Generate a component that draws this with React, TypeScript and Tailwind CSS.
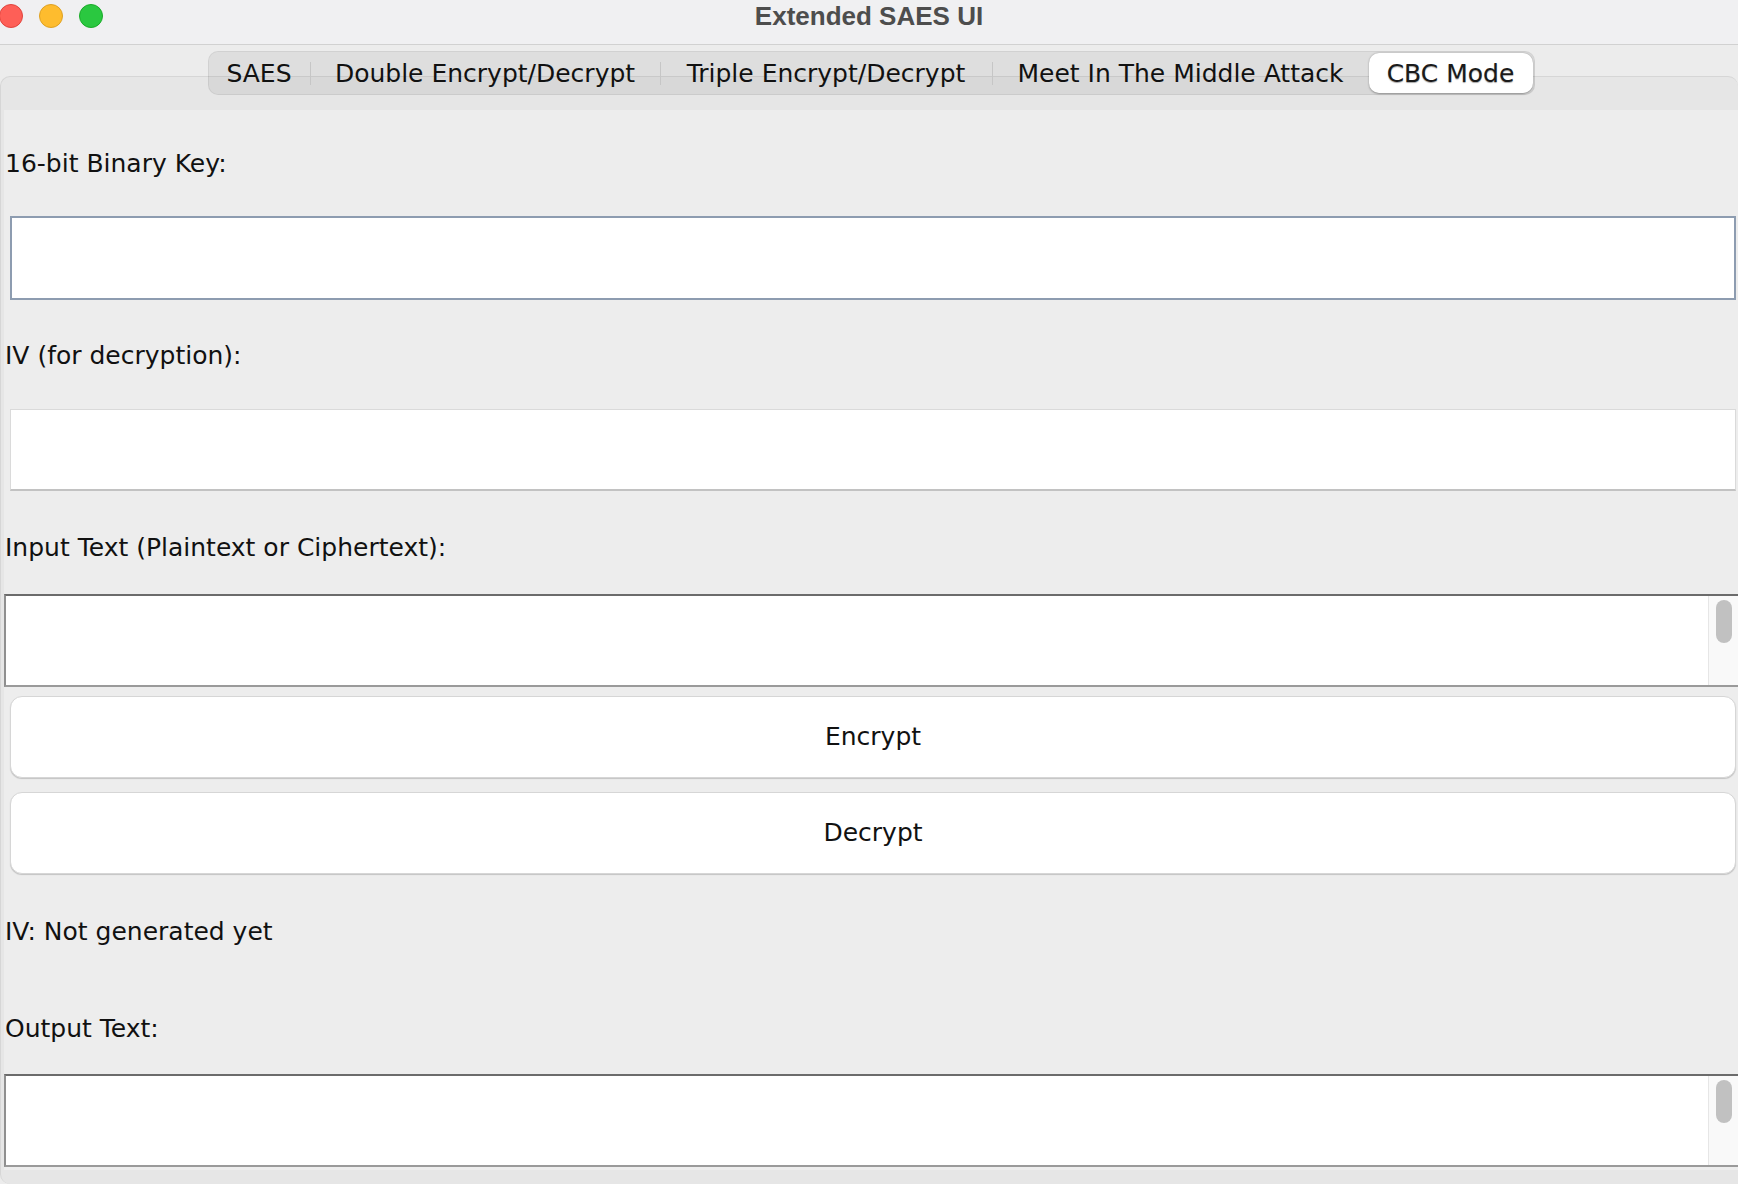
import React from 'react';

const tabs = [
  { label: 'SAES', width: 'w-[101px]' },
  { label: 'Double Encrypt/Decrypt', width: 'w-[349px]' },
  { label: 'Triple Encrypt/Decrypt', width: 'w-[331px]' },
  { label: 'Meet In The Middle Attack', width: 'w-[376px]' },
];

const Label = ({ children, className = '' }: { children: React.ReactNode; className?: string }) => (
  <div className={`pl-[1px] text-[25px] leading-[30px] text-[#111] ${className}`}>{children}</div>
);

const ScrollArea = ({ className = '' }: { className?: string }) => (
  <div
    className={`flex h-[93px] border-t-2 border-b-2 border-l-2 border-t-[#6b6b6b] border-b-[#9a9a9a] border-l-[#8f8f8f] bg-white ${className}`}
  >
    <div className="flex-1" />
    <div className="w-[30px] border-l border-[#e6e6e6] bg-[#f9f9f9] pt-[4px] pl-[7px]">
      <div className="h-[43px] w-[16px] rounded-full bg-[#c1c1c1]" />
    </div>
  </div>
);

const MacButton = ({ children, className = '' }: { children: React.ReactNode; className?: string }) => (
  <button
    className={`ml-[6px] mr-[2px] flex h-[82px] items-center justify-center rounded-[12px] border border-[#d6d6d6] bg-white text-[25px] text-[#111] shadow-[0_1px_1px_rgba(0,0,0,0.18)] ${className}`}
  >
    {children}
  </button>
);

export default function App() {
  return (
    <div className="flex h-[1184px] w-[1738px] flex-col overflow-hidden bg-[#ececec] font-['DejaVu_Sans',sans-serif]">
      {/* title bar */}
      <div className="grid h-[45px] grid-cols-[1fr_auto_1fr] border-b border-[#d1d1d1] bg-[#f0f0f2]">
        <div className="-ml-[1px] flex items-start gap-[16px] pt-[4px]">
          <span className="h-[24px] w-[24px] rounded-full border border-[#e0443e] bg-[#fe5f57]" />
          <span className="h-[24px] w-[24px] rounded-full border border-[#dea123] bg-[#febc2e]" />
          <span className="h-[24px] w-[24px] rounded-full border border-[#1aab29] bg-[#2ac840]" />
        </div>
        <div className="pt-[2px] font-['Liberation_Sans',sans-serif] text-[26px] leading-[29px] font-bold text-[#4d4d4d]">
          Extended SAES UI
        </div>
        <div />
      </div>

      {/* tab strip */}
      <div className="relative z-10 flex h-[31px] justify-center pt-[6px] pl-[4px]">
        <div className="flex h-[44px] items-center rounded-[10px] border border-[rgba(0,0,0,0.06)] bg-[rgba(0,0,0,0.06)] pr-[1px]">
          {tabs.map((t, i) => (
            <React.Fragment key={t.label}>
              {i > 0 && <span className="h-[23px] w-px bg-[#c6c6c6]" />}
              <div className={`${t.width} pt-[2px] text-center text-[25px] leading-[30px] text-[#111]`}>{t.label}</div>
            </React.Fragment>
          ))}
          <div className="flex h-[40px] w-[164px] items-center justify-center rounded-[10px] bg-white pt-[2px] text-[25px] text-[#1a1a1a] shadow-[0_0.5px_2px_rgba(0,0,0,0.35)] [text-shadow:0_1px_1px_rgba(0,0,0,0.35)]">
            CBC Mode
          </div>
        </div>
      </div>

      {/* tabbed pane */}
      <div className="flex flex-1 flex-col rounded-t-[10px] rounded-bl-[10px] border-t border-l border-[#d6d6d6] bg-[#e6e6e6] pt-[33px] pl-[3px] pb-[7px]">
        <div className="flex flex-col bg-[#ededed] pb-[3px]">
          <Label className="mt-[39px]">16-bit Binary Key:</Label>
          <div className="mt-[37px] ml-[6px] mr-[2px] h-[84px] border-2 border-[#8d9cb0] bg-white" />

          <Label className="mt-[41px]">IV (for decryption):</Label>
          <div className="mt-[38px] ml-[6px] mr-[2px] h-[82px] border border-b-2 border-[#dadada] border-b-[#c2c2c2] bg-white" />

          <Label className="mt-[42px]">Input Text (Plaintext or Ciphertext):</Label>
          <ScrollArea className="mt-[31px]" />

          <MacButton className="mt-[9px]">Encrypt</MacButton>
          <MacButton className="mt-[14px]">Decrypt</MacButton>

          <Label className="mt-[43px]">IV: Not generated yet</Label>
          <Label className="mt-[67px]">Output Text:</Label>
          <ScrollArea className="mt-[30px]" />
        </div>
      </div>
    </div>
  );
}
